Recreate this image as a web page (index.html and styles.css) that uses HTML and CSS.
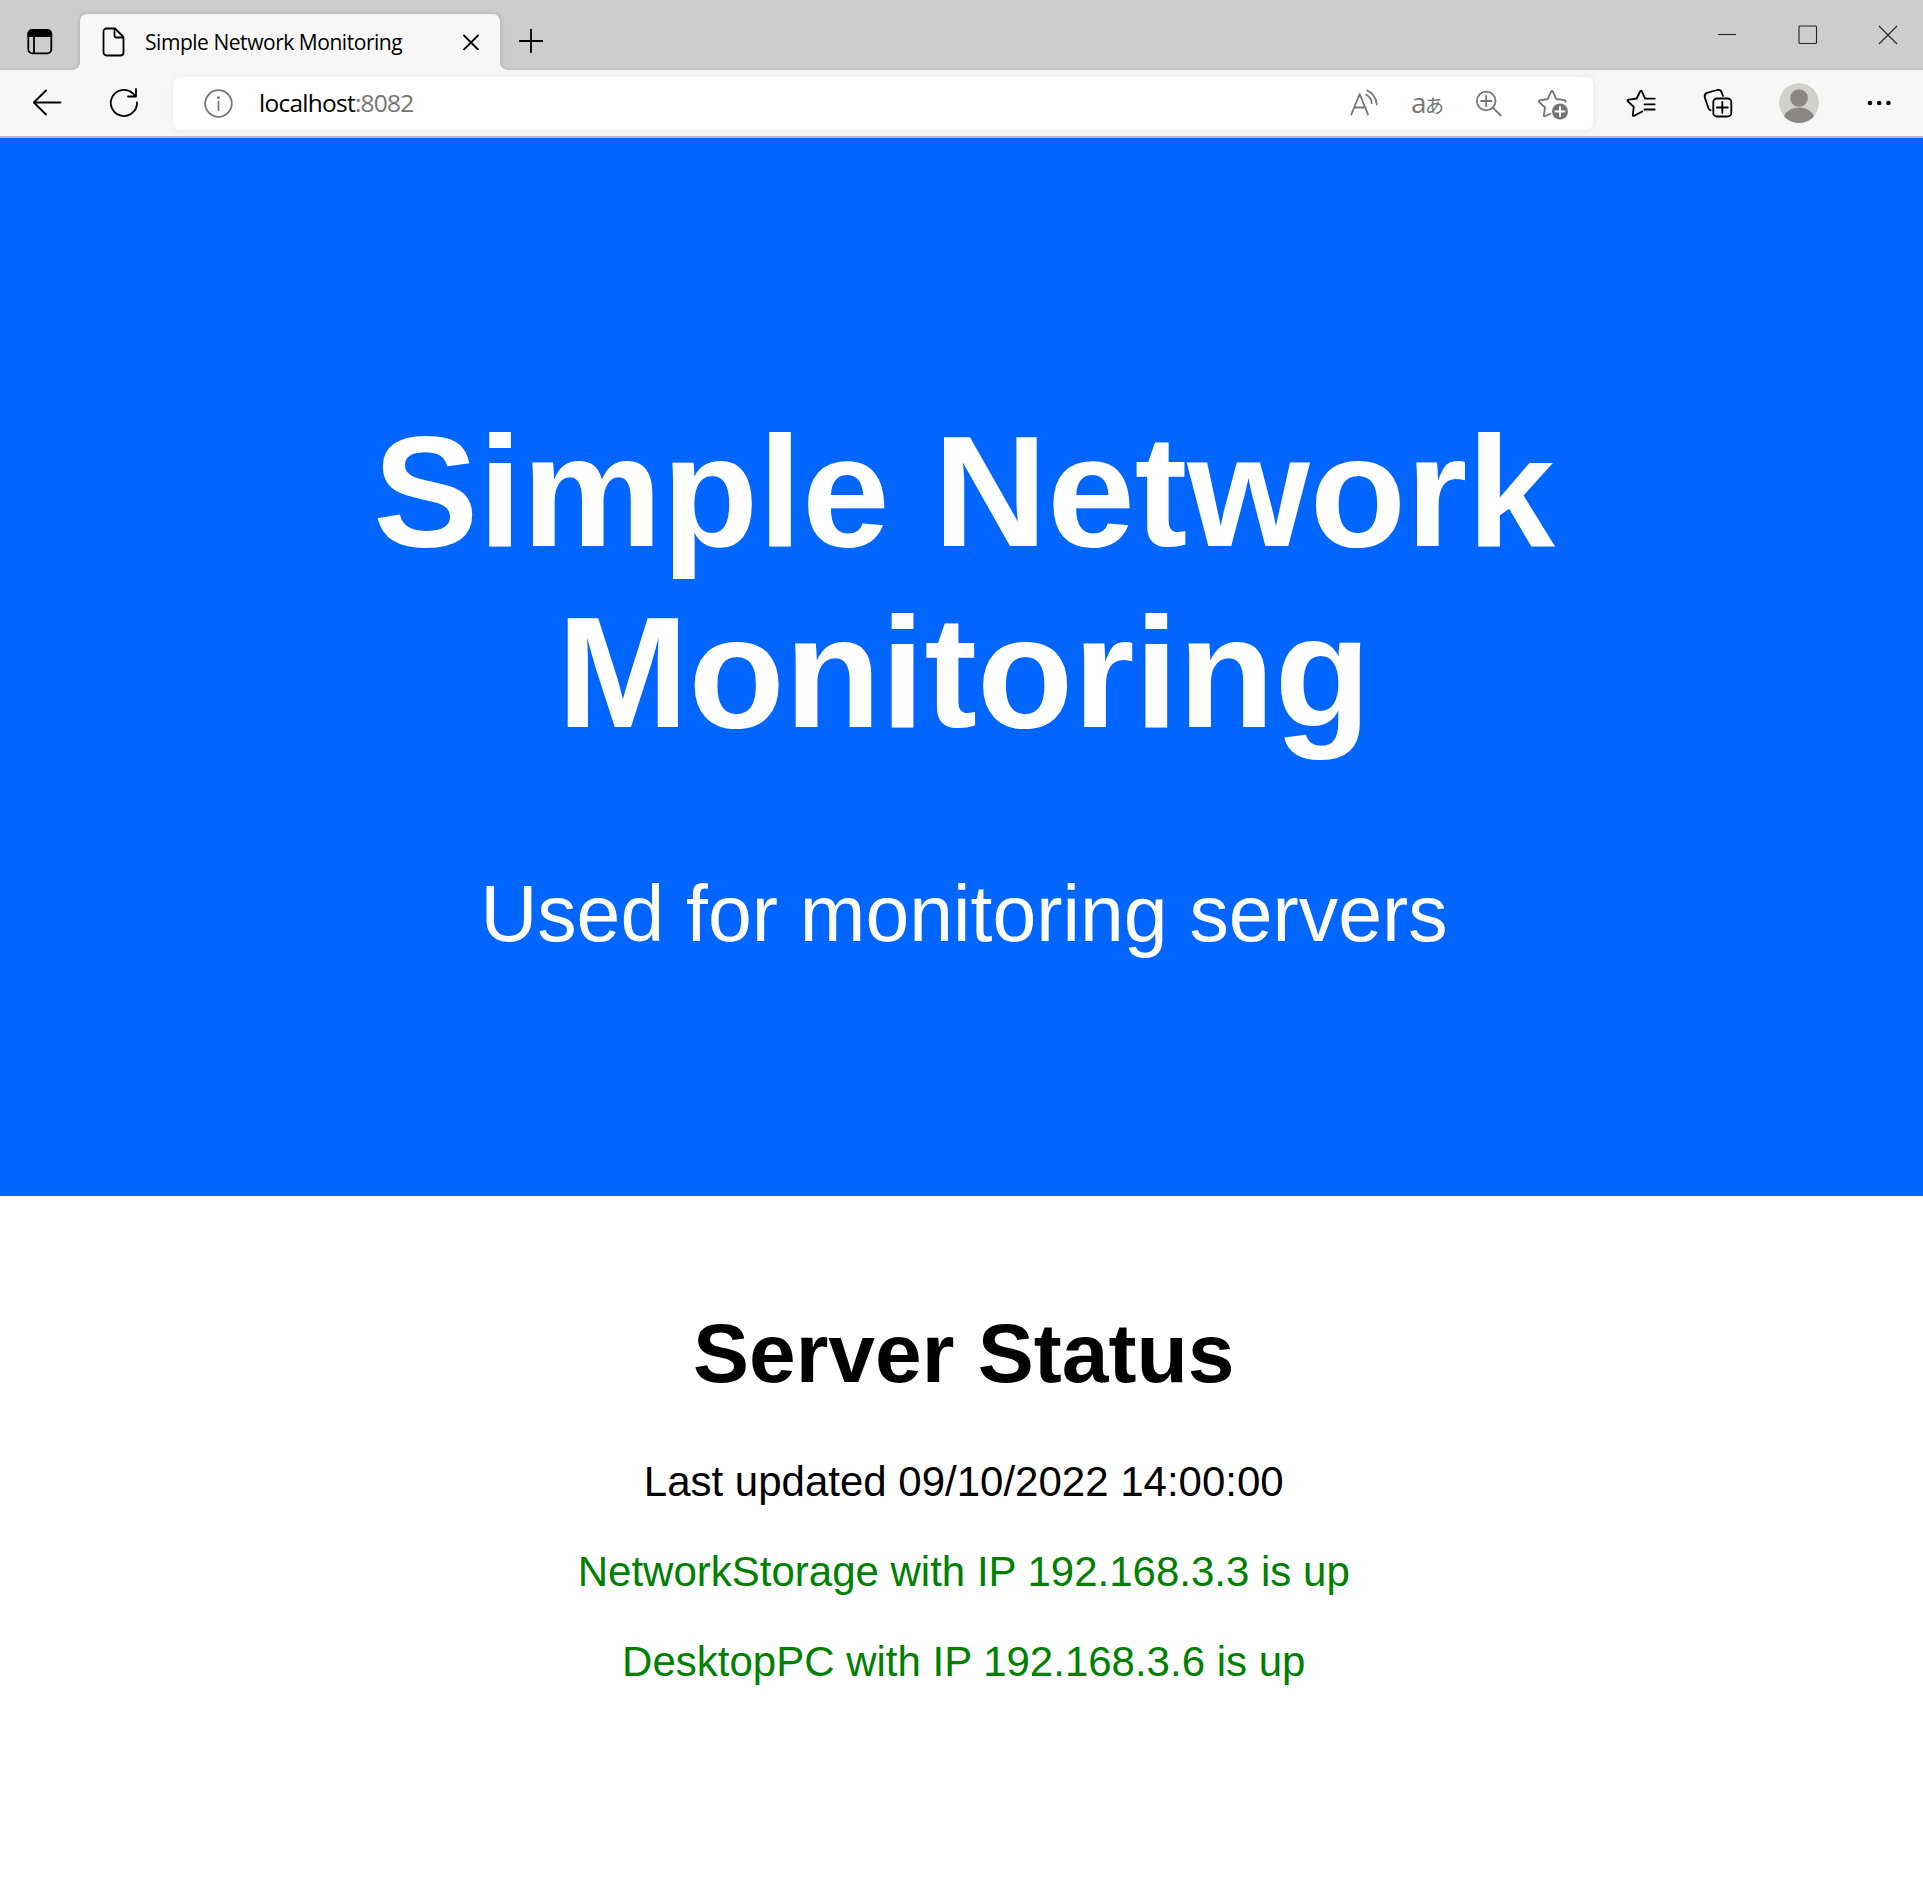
FILE: index.html
```html
<!DOCTYPE html>
<html lang="en">
<head>
<meta charset="utf-8">
<title>Simple Network Monitoring</title>
<link rel="stylesheet" href="styles.css">
</head>
<body>
<header class="browser">
  <div class="tabstrip">
    <svg class="icon tab-actions" width="26" height="26" viewBox="0 0 26 26"><rect x="1.3" y="1.3" width="23" height="23" rx="4"/><path d="M1.3 7V5a4 4 0 0 1 4-4h15a4 4 0 0 1 4 4v2z" fill="#000"/><path d="M7 7v17"/></svg>
    <div class="tab">
      <svg class="icon" width="24" height="30" viewBox="0 0 24 30"><path d="M4.500 1.500H13L21.500 10V25.500a3 3 0 0 1-3 3H4.500a3 3 0 0 1-3-3V4.500a3 3 0 0 1 3-3z"/><path d="M12.500 2v6.500a2 2 0 0 0 2 2h6.500"/></svg>
      <span class="tab-title">Simple Network Monitoring</span>
      <svg class="icon tab-close" width="16" height="16" viewBox="0 0 16 16"><path d="M1 1.500l14 14M15 1.500L1 15.500"/></svg>
    </div>
    <svg class="icon new-tab" width="24" height="24" viewBox="0 0 24 24"><path d="M12 0v24M0 12h24"/></svg>
    <div class="window-controls">
      <svg width="20" height="20" viewBox="0 0 20 20"><path d="M0 9.500h18"/></svg>
      <svg width="20" height="20" viewBox="0 0 20 20"><rect x="1" y="1" width="17.500" height="17.500" rx="1"/></svg>
      <svg width="20" height="20" viewBox="0 0 20 20"><path d="M1 1l18 18M19 1L1 19"/></svg>
    </div>
  </div>
  <div class="toolbar">
    <svg class="icon back" width="32" height="32" viewBox="0 0 32 32"><path d="M29.500 15.500H3M15 3.500L2.800 15.500 15 27.500"/></svg>
    <svg class="icon reload" width="32" height="32" viewBox="0 0 32 32"><path d="M29 15.300A13.100 13.100 0 1 1 24.800 6.300L28 9.300M28 2v7.500h-8"/></svg>
    <div class="address">
      <svg class="icon muted" width="32" height="32" viewBox="0 0 32 32"><circle cx="16.500" cy="15.500" r="13.300"/><path d="M16.500 13.500v8.500"/><circle cx="16.500" cy="9.700" r="1.400" class="solid"/></svg>
      <span class="url">localhost<span class="port">:8082</span></span>
      <div class="address-actions">
        <svg class="icon muted" width="32" height="32" viewBox="0 0 32 32"><path d="M3.300 26.500L11.700 6 20 26.500M6 19.500h11.500M18.300 6.800q5 2.700 5.400 8.400M19.300 2.500q8.500 3.700 9.400 14"/></svg>
        <span class="translate"><span class="latin">a</span><span class="kana">あ</span></span>
        <svg class="icon muted" width="32" height="32" viewBox="0 0 32 32"><circle cx="12.200" cy="13" r="9.300"/><path d="M19 19.800L26.800 27.500M12.200 7.800v10.400M7 13h10.400"/></svg>
        <svg class="icon muted" width="32" height="32" viewBox="0 0 32 32"><path d="M13.500 25.800L8 28.300Q6.600 28.900 6.800 27.300L8 19.500 2 13.800Q1.300 12.500 2.700 12.300L10.700 11 14.200 3.700Q15 2.300 15.800 3.700L19.300 11 27.500 12.200Q29 12.500 28.300 13.700"/><circle cx="23" cy="23.500" r="8" class="solid"/><path d="M23 19v9M18.500 23.500h9" class="badge-plus"/></svg>
      </div>
    </div>
    <div class="tools">
      <svg class="icon" width="32" height="32" viewBox="0 0 32 32"><path d="M17.300 24.500L9.200 28.800Q7.600 29.400 7.800 27.800L8.800 19.800 3 14.500Q1.700 13 3.700 12.700L11.700 11.500 15.200 4.300Q16 2.800 16.800 4.300L20.200 11.700H29.700M19.500 17.300h10.200M19.500 22.500h10.200"/></svg>
      <svg class="icon" width="32" height="32" viewBox="0 0 32 32"><rect x="11.300" y="11.500" width="18" height="18" rx="3.600"/><path d="M20.300 15v11M14.800 20.500h11M8.700 23.300Q7 23 6.400 21L2.800 10.500Q2 7.200 5 5.900L15.300 3Q18.700 2.300 19.700 5.500L21 9"/></svg>
      <svg width="40" height="40" viewBox="0 0 40 40"><defs><clipPath id="face"><circle cx="20" cy="20" r="20"/></clipPath></defs><g clip-path="url(#face)"><circle cx="20" cy="20" r="20" fill="#d2d0cc"/><circle cx="20" cy="15" r="8.800" fill="#8b8784"/><ellipse cx="20" cy="36.500" rx="15.500" ry="12" fill="#8b8784"/></g></svg>
      <svg width="32" height="32" viewBox="0 0 32 32"><circle cx="6" cy="16" r="2.300"/><circle cx="15.200" cy="16" r="2.300"/><circle cx="24.400" cy="16" r="2.300"/></svg>
    </div>
  </div>
</header>
<main>
  <section class="hero">
    <h1>Simple Network Monitoring</h1>
    <p>Used for monitoring servers</p>
  </section>
  <section class="status">
    <h1>Server Status</h1>
    <p>Last updated 09/10/2022 14:00:00</p>
    <p class="up">NetworkStorage with IP 192.168.3.3 is up</p>
    <p class="up">DesktopPC with IP 192.168.3.6 is up</p>
  </section>
</main>
</body>
</html>
```
FILE: styles.css
```css
* { box-sizing: border-box; }
body {
  margin: 0;
  min-height: 1891px;
  background: #fff;
  font-family: "Liberation Sans", Arial, sans-serif;
  font-size: 42px;
}
svg { display: block; flex: none; }
.icon { fill: none; stroke: #000; stroke-width: 1.8; stroke-linecap: round; stroke-linejoin: round; }
.muted { stroke: #757575; }
.solid { fill: #757575; stroke: none; }
.badge-plus { stroke: #fff; stroke-width: 2; }

.browser { height: 138px; background: #f7f7f7; border-bottom: 2px solid #b9b9b9; font-family: "Open Sans", sans-serif; }
.tabstrip {
  display: flex;
  height: 70px;
  padding: 0 25px 0 27px;
  background: linear-gradient(#cdcdcd 66px, #c3c3c3);
}
.tab-actions { margin-top: 29px; }
.tab {
  position: relative;
  display: flex;
  align-items: center;
  width: 420px;
  height: 56px;
  margin: 14px 0 0 27px;
  padding: 0 21px 0 22px;
  border-radius: 7px 7px 0 0;
  background: #f7f7f7;
  box-shadow: 0 0 5px rgba(0, 0, 0, .2);
  clip-path: inset(-6px -7px 0 -7px);
}
/* Flared feet where the active tab meets the toolbar */
.tab::before, .tab::after {
  content: "";
  position: absolute;
  bottom: 0;
  width: 7px;
  height: 7px;
}
.tab::before { left: -7px; background: radial-gradient(circle at 0 0, transparent 6.500px, #f7f7f7 7px); }
.tab::after { right: -7px; background: radial-gradient(circle at 100% 0, transparent 6.500px, #f7f7f7 7px); }
.tab-title { margin-left: 19px; font-size: 21px; letter-spacing: -.46px; white-space: nowrap; }
.tab-close { margin-left: auto; }
.new-tab { margin: 29px 0 0 19px; stroke-linecap: butt; }
.window-controls { display: flex; gap: 60px; margin: 25px 0 0 auto; fill: none; stroke: #222; stroke-width: 1.1; }

.toolbar { display: flex; align-items: center; height: 66px; padding: 0 27px 0 31px; }
.reload { margin-left: 45px; }
.address {
  display: flex;
  align-items: center;
  width: 1420px;
  height: 53px;
  margin: 1px 0 0 33px;
  padding: 0 24px 0 29px;
  border-radius: 7px;
  background: #fff;
  box-shadow: 0 0 7px rgba(0, 0, 0, .07);
}
.url { margin-left: 25px; padding-bottom: 2px; font-size: 24.500px; letter-spacing: -.75px; }
.port { color: #757575; }
.address-actions { display: flex; align-items: center; gap: 31px; margin-left: auto; }
.translate { display: flex; align-items: baseline; width: 32px; height: 32px; color: #757575; line-height: 28px; }
.latin { width: 14px; font-size: 28px; }
.kana { font-family: "Noto Sans CJK JP", sans-serif; font-size: 19px; }
.tools { display: flex; align-items: center; gap: 45px; margin-left: auto; }

.hero { height: 1058px; padding: 157.500px 157.500px 157.500px 162.500px; background: #06f; color: #fff; text-align: center; }
.hero h1 { margin: .67em 0; font-size: 157.500px; }
.hero p { margin: 0; font-size: 78.750px; }
.status { padding: 52.500px 52.500px 52.500px 57px; text-align: center; }
.status h1 { margin: .67em 0; font-size: 84px; }
.status p { margin: 42px 0; }
.status .up { color: green; }
```
